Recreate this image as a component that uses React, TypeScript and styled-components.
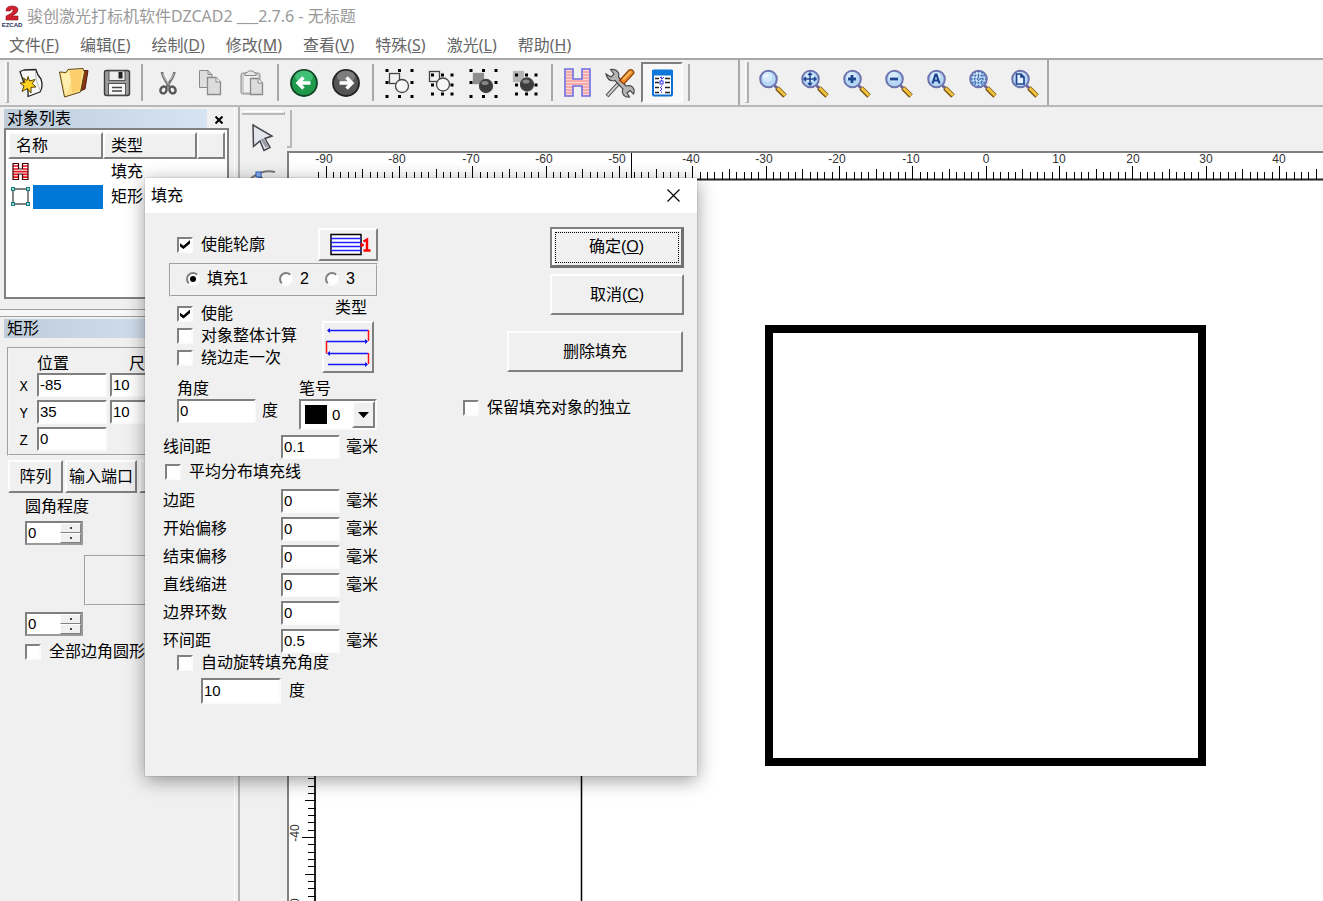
import React, { useEffect, useRef, useState } from "react";
import styled, { createGlobalStyle, css } from "styled-components";

const face = "#f0f0f0";
const shade = "#808080";
const uiFont = `"Liberation Sans", "Noto Sans CJK SC", sans-serif`;
const menuFont = `"Noto Sans", "Noto Sans CJK SC", sans-serif`;

const GlobalStyle = createGlobalStyle`
  *, *::before, *::after { box-sizing: border-box; }
  body { margin: 0; overflow: hidden; background: ${face}; }
  button, input, select { font: inherit; color: inherit; margin: 0; padding: 0; border-radius: 0; }
`;

const sunken = css`
  border: 2px solid;
  border-color: ${shade} #fbfbfb #fbfbfb ${shade};
`;

const raised = css`
  border: 2px solid;
  border-color: #fdfdfd ${shade} ${shade} #fdfdfd;
`;

const Window = styled.div`
  position: relative;
  display: flex;
  flex-direction: column;
  min-height: 100vh;
  background: ${face};
  color: #000;
  font: 16px/16px ${uiFont};
`;

/* ---------- title and menu ---------- */

const TitleBar = styled.header`
  display: flex;
  align-items: center;
  gap: 4px;
  height: 32px;
  padding-left: 1px;
  background: #fff;
  color: #999;
  font: 16px/20px ${menuFont};
`;

const TitleText = styled.h1`
  margin: 0;
  font: inherit;
  white-space: pre;
`;

const MenuBar = styled.nav`
  display: flex;
  gap: 21px;
  height: 26px;
  padding: 0 9px;
  background: #fff;
`;

const MenuItem = styled.button`
  border: 0;
  background: none;
  color: #666;
  font: 16px/24px ${menuFont};
`;

/* ---------- toolbar ---------- */

const ToolBar = styled.div`
  display: flex;
  align-items: stretch;
  height: 49px;
  border-top: 2px solid #a8a8a8;
  border-bottom: 2px solid #b8b8b8;
`;

const ToolGroup = styled.div<{ $room?: number; $lead?: number }>`
  display: flex;
  align-items: center;
  padding-left: ${(p) => p.$lead ?? 0}px;
  padding-right: ${(p) => p.$room ?? 5}px;
`;

const ToolButton = styled.button<{ $pressed?: boolean; $wide?: boolean }>`
  display: grid;
  place-items: center;
  width: ${(p) => (p.$wide ? 43 : 42)}px;
  height: 41px;
  border: 0;
  background: ${(p) => (p.$pressed ? "#f8f8f8" : "none")};
  ${(p) => p.$pressed && sunken}
`;

const Divider = styled.span<{ $full?: boolean }>`
  width: 2px;
  margin: ${(p) => (p.$full ? "0" : "4px 4px 4px 0")};
  background: #a8a8a8;
`;

const Grip = styled.span`
  width: 4px;
  margin: 2px 0 2px 5px;
  border-right: 2px solid #b0b0b0;
  border-left: 1px solid #fff;
  border-bottom: 1px solid #b0b0b0;
`;

/* ---------- main area ---------- */

const Main = styled.main`
  flex: 1;
  display: grid;
  grid-template-columns: 240px 47px minmax(0, 1fr);
`;

const Dock = styled.aside`
  display: flex;
  flex-direction: column;
  padding: 2px 7px 0 4px;
  border-right: 2px solid #b4b4b4;
  box-shadow: inset -3px 0 0 ${face}, inset -4px 0 0 #fff;
`;

const PanelTitle = styled.div`
  display: flex;
  justify-content: space-between;
  height: 19px;
`;

const PanelName = styled.h2`
  flex: 1;
  max-width: 203px;
  margin: 0;
  padding-left: 3px;
  background: linear-gradient(90deg, #bfcddb, #d7e4f2);
  font: 16px/19px ${uiFont};
`;

const PanelClose = styled.button`
  width: 24px;
  border: 0;
  background: none;
`;

const ListBox = styled.div`
  height: 171px;
  margin-right: 2px;
  border: 2px solid ${shade};
  background: #fff;
  padding: 2px;
`;

const ObjectTable = styled.table`
  width: 100%;
  table-layout: fixed;
  border-collapse: separate;
  border-spacing: 0;
`;

const HeadCell = styled.th<{ $width?: number }>`
  width: ${(p) => (p.$width ? `${p.$width}px` : "auto")};
  height: 27px;
  padding: 1px 0 0 6px;
  ${raised}
  background: ${face};
  font-weight: 400;
  text-align: left;
`;

const Cell = styled.td<{ $name?: boolean }>`
  height: 25px;
  padding: 0 0 0 ${(p) => (p.$name ? 3 : 8)}px;
`;

const NameSlot = styled.div<{ $selected?: boolean }>`
  display: flex;
  align-items: center;
  height: 24px;
  background: ${(p) => (p.$selected ? "linear-gradient(90deg, #fff 22px, #0078d7 22px)" : "none")};
`;

const Splitter = styled.div`
  height: 8px;
  margin: 10px -3px 2px -4px;
  border-top: 1px solid #a0a0a0;
  border-bottom: 1px solid #a0a0a0;
  background: #f6f6f6;
`;

const PropertyBox = styled.fieldset`
  display: grid;
  grid-template-columns: 25px 70px 70px;
  column-gap: 3px;
  grid-template-rows: 20px 27px 27px 27px;
  min-width: 0;
  height: 109px;
  margin: 9px 2px 0 3px;
  padding: 4px 0 0 0;
  border: 2px groove #f4f4f4;
`;

const ColumnTitle = styled.span<{ $centred?: boolean }>`
  padding-top: 3px;
  text-align: ${(p) => (p.$centred ? "center" : "left")};
`;

const AxisLabel = styled.label`
  padding: 6px 6px 0 0;
  font: 14px/16px "Liberation Mono", monospace;
  text-align: right;
`;

const TextBox = styled.input<{ $width?: number; $height?: number }>`
  width: ${(p) => p.$width ?? 59}px;
  height: ${(p) => p.$height ?? 24}px;
  padding: 0 1px 1px;
  ${sunken}
  background: #fff;
  font: 15px/18px ${uiFont};
`;

const ButtonRow = styled.div`
  display: flex;
  gap: 2px;
  margin: 4px 0 0 4px;
  overflow: hidden;
`;

const PushButton = styled.button<{ $width: number; $height: number; $default?: boolean }>`
  flex: none;
  display: grid;
  place-items: center;
  width: ${(p) => p.$width}px;
  height: ${(p) => p.$height}px;
  ${raised}
  background: ${face};
  white-space: nowrap;
  ${(p) =>
    p.$default &&
    css`
      border-width: 2px 3px 3px 2px;
      box-shadow: inset 1px 1px 0 1px #fff;
      border-color: #808080 #707070 #707070 #808080;
      outline: 1px dotted #000;
      outline-offset: -6px;
    `}
`;

const Caption = styled.span<{ $indent?: boolean }>`
  padding-left: ${(p) => (p.$indent ? 13 : 0)}px;
  white-space: nowrap;
`;

const CornerSection = styled.div`
  display: flex;
  flex-direction: column;
  align-items: flex-start;
  padding: 6px 0 0 21px;
`;

const SpinBox = styled.div`
  display: grid;
  grid-template-columns: 1fr 21px;
  grid-template-rows: 1fr 1fr;
  width: 58px;
  height: 24px;
  margin-top: 6px;
  ${sunken}
  border-right-color: #999;
  border-bottom-color: #999;
  background: #fff;
`;

const SpinValue = styled.input`
  grid-row: 1 / 3;
  width: 100%;
  min-width: 0;
  border: 0;
  background: none;
  padding-left: 1px;
  font: 15px/18px ${uiFont};
`;

const SpinButton = styled.button`
  display: grid;
  place-items: center;
  border: 1px solid;
  border-color: #fff ${shade} ${shade} #fff;
  background: ${face};

  &::before {
    content: "";
    width: 2px;
    height: 2px;
    background: #444;
  }
`;

const CornerPreview = styled.div`
  align-self: stretch;
  height: 51px;
  margin: 10px 24px 0 59px;
  border: 2px groove #f4f4f4;
`;

const RoundAll = styled.div`
  margin-top: 8px;
`;

const CheckLabel = styled.label`
  display: flex;
  align-items: center;
  gap: 8px;
  white-space: nowrap;
`;

const CheckBox = styled.input`
  appearance: none;
  flex: none;
  display: grid;
  place-items: center;
  width: 16px;
  height: 16px;
  ${sunken}
  background: #fff;

  &:checked::before {
    content: "";
    width: 10px;
    height: 9px;
    background: #000;
    clip-path: polygon(0 35%, 35% 65%, 100% 0, 100% 38%, 35% 100%, 0 72%);
  }
`;

const Radio = styled.input`
  appearance: none;
  flex: none;
  display: grid;
  place-items: center;
  width: 14px;
  height: 14px;
  ${sunken}
  border-radius: 50%;
  background: #fff;

  &:checked::before {
    content: "";
    width: 6px;
    height: 6px;
    border-radius: 50%;
    background: #000;
  }
`;

/* ---------- draw tools and canvas ---------- */

const Palette = styled.div`
  display: flex;
  flex-direction: column;
  align-items: flex-start;
  gap: 2px;
  padding-top: 4px;
`;

const PaletteGrip = styled.span`
  width: 43px;
  height: 4px;
  margin-left: 2px;
  border-top: 1px solid #fff;
  border-right: 1px solid #b0b0b0;
  border-bottom: 2px solid #b8b8b8;
`;

const PaletteButton = styled.button`
  display: grid;
  place-items: center;
  width: 44px;
  height: 42px;
  border: 0;
  background: none;
`;

const WorkArea = styled.section`
  display: flex;
  flex-direction: column;
  min-width: 0;
`;

const EmptyBar = styled.div`
  display: flex;
  height: 44px;
  padding: 3px 0;
`;

const EmptyGrip = styled.span`
  width: 5px;
  border-right: 2px solid #b8b8b8;
  border-bottom: 2px solid #b8b8b8;
`;

const View = styled.div`
  flex: 1;
  display: flex;
  border-top: 2px solid ${shade};
  border-left: 2px solid ${shade};
  background: #fff;
`;

const Drawing = styled.svg`
  flex: 1;
  display: block;
  min-width: 0;
  font: 12px "Liberation Sans", sans-serif;
`;

/* ---------- dialog ---------- */

const Dialog = styled.section`
  position: absolute;
  left: 145px;
  top: 178px;
  width: 552px;
  height: 598px;
  background: ${face};
  box-shadow: 0 4px 18px rgba(0, 0, 0, 0.4), 0 0 1px rgba(0, 0, 0, 0.4);
`;

const DialogTitle = styled.header`
  display: flex;
  align-items: center;
  justify-content: space-between;
  height: 35px;
  padding: 0 17px 0 6px;
  background: #fff;
`;

const DialogName = styled.h2`
  margin: 0;
  font: 16px/16px ${uiFont};
`;

const CloseButton = styled.button`
  display: grid;
  border: 0;
  background: none;
`;

const DialogBody = styled.form`
  display: flex;
  justify-content: space-between;
  padding: 14px 13px 0 18px;
`;

const FillForm = styled.div`
  width: 216px;
`;

const OutlineRow = styled.div`
  display: flex;
  justify-content: space-between;
  padding: 1px 1px 0 14px;
`;

const FillTabs = styled.fieldset`
  display: flex;
  align-items: center;
  height: 34px;
  min-width: 0;
  margin: 2px 1px 0 6px;
  padding: 0 0 2px 15px;
  border: 2px groove #f4f4f4;
`;

const TabChoice = styled.label<{ $width: number }>`
  display: flex;
  align-items: center;
  gap: 7px;
  width: ${(p) => p.$width}px;
`;

const EnableRow = styled.div`
  display: flex;
  justify-content: space-between;
  margin-top: 3px;
  padding: 0 5px 0 14px;
`;

const CheckStack = styled.div`
  display: grid;
  grid-auto-rows: 22px;
  padding-top: 3px;
`;

const TypeStack = styled.div`
  display: flex;
  flex-direction: column;
  gap: 5px;
`;

const AngleRow = styled.div`
  display: flex;
  justify-content: space-between;
  margin-top: 8px;
  padding: 0 2px 0 14px;
`;

const Stack = styled.div`
  display: flex;
  flex-direction: column;
  gap: 2px;
`;

const WithUnit = styled.div`
  display: flex;
  align-items: center;
  gap: 6px;
`;

const PenBox = styled.div`
  display: flex;
  align-items: center;
  width: 78px;
  height: 31px;
  padding-left: 4px;
  ${sunken}
  background: #fff;
`;

const PenColour = styled.span`
  flex: none;
  width: 22px;
  height: 19px;
  background: #000;
`;

const PenSelect = styled.select`
  appearance: none;
  flex: 1;
  min-width: 0;
  padding-left: 5px;
  border: 0;
  background: none;
  font: 15px/18px ${uiFont};
`;

const PenArrow = styled.span`
  display: grid;
  place-items: center;
  width: 23px;
  height: 27px;
  ${raised}
  background: ${face};
`;

const SizeRow = styled.div`
  display: grid;
  grid-template-columns: 118px 59px auto;
  align-items: center;
  height: 24px;
`;

const Unit = styled.span`
  padding-left: 6px;
`;

const SpacingBlock = styled.div`
  margin-top: 5px;
`;

const EvenRow = styled.div`
  margin-top: 5px;
  padding-left: 2px;
`;

const SizeList = styled.div`
  display: grid;
  gap: 4px;
  margin-top: 9px;
`;

const RotateBlock = styled.div`
  margin-top: 2px;
  padding-left: 14px;
`;

const RotateValue = styled.div`
  display: flex;
  align-items: center;
  gap: 8px;
  margin-top: 7px;
  padding-left: 24px;
`;

const Actions = styled.div`
  display: flex;
  flex-direction: column;
  align-items: flex-end;
  gap: 6px;
  width: 221px;
`;

const DeleteSlot = styled.div`
  margin-top: 10px;
  padding-right: 1px;
`;

const KeepSlot = styled.div`
  align-self: flex-start;
  margin-top: 22px;
`;

/* ---------- icons ---------- */

const Icon = ({ children }: { children: React.ReactNode }) => (
  <svg width="32" height="32" viewBox="0 0 32 32" aria-hidden="true">
    {children}
  </svg>
);

const Logo = () => (
  <svg width="22" height="24" viewBox="0 0 22 24" aria-hidden="true">
    <path d="M5 7 Q5 2 11 2 Q17 2 17 6 Q17 9 11 12 H17 V16 H5 V12 Q12 9 12 6.500 Q12 5 11 5 Q10 5 9.500 7 Z" fill="#d21f2b" stroke="#7d1420" strokeWidth=".6" />
    <text x="11" y="22.500" textAnchor="middle" fontSize="6" fontWeight="700" fontFamily="Liberation Sans" fill="#23305f">EZCAD</text>
  </svg>
);

const NewIcon = () => (
  <Icon>
    <path d="M5 4.500 L9 3 L21 2.500 Q22 8 26 12 Q28.500 20 25 25 L13 29.500 Q14 22 9 16 Z" fill="#f8f8f8" stroke="#222" strokeWidth="1.300" strokeLinejoin="round" />
    <path d="M20.500 3.500 Q20 12 25 23" fill="none" stroke="#bbb" />
    <path d="M13 9.500 L14.500 14 L20 12.500 L17.200 16.500 L21 20 L16 20.300 L16 26 L12.300 21.500 L7 24.500 L9 19 L5 16 L10 15.500 L8.500 11 L12 13.500 Z" fill="#ffd21f" stroke="#5a4200" strokeWidth="1" />
  </Icon>
);

const OpenIcon = () => (
  <Icon>
    <path d="M18 4 L30 3.500 L27 22 L22 24 Z" fill="#8a3416" stroke="#4e1c0a" />
    <path d="M1.500 5 L8 5.500 L10 2.500 L25 1.500 L26.500 5 L22.500 25 L6.500 30 Z" fill="#ffe08a" stroke="#5c4712" />
    <path d="M12 4 L24.500 3 L21.500 23.500 L14 26 Z" fill="#fdcf6c" />
    <path d="M3 6.500 L8 7 L11 4.500 L13 14 L8 28 Z" fill="#fff0b0" />
  </Icon>
);

const SaveIcon = () => (
  <Icon>
    <rect x="3.500" y="3.500" width="25" height="25" rx="2" fill="#9b9b9b" stroke="#3c3c3c" strokeWidth="1.400" />
    <rect x="8" y="4" width="16" height="9.500" fill="#eee" stroke="#555" />
    <rect x="17.500" y="5" width="4" height="6.500" fill="#222" />
    <rect x="7.500" y="16.500" width="17" height="11.500" fill="#f7f7f7" stroke="#555" />
    <path d="M11 20.500 H21 M11 24 H21" stroke="#444" strokeWidth="1.400" />
  </Icon>
);

const CutIcon = () => (
  <Icon>
    <path d="M10 5 Q10 9 17.500 20 M22.500 5 Q22 9 14.500 20" fill="none" stroke="#777" strokeWidth="2.600" />
    <path d="M10.500 7 L16.500 17 M22 7 L18 13" stroke="#ccc" strokeWidth="1" />
    <ellipse cx="11.500" cy="23" rx="3" ry="3.600" fill="none" stroke="#555" strokeWidth="2.400" transform="rotate(25 11.500 23)" />
    <ellipse cx="20.500" cy="23" rx="3" ry="3.600" fill="none" stroke="#555" strokeWidth="2.400" transform="rotate(-25 20.500 23)" />
  </Icon>
);

const CopyIcon = () => (
  <Icon>
    <path d="M5.500 3.500 H14 L18 7.500 V20.500 H5.500 Z" fill="#dedede" stroke="#8a8a8a" />
    <path d="M14 3.500 V7.500 H18" fill="none" stroke="#8a8a8a" />
    <path d="M13.500 10.500 H22 L26.500 15 V27.500 H13.500 Z" fill="#dcdcdc" stroke="#8a8a8a" strokeWidth="1.300" />
    <path d="M22 10.500 V15 H26.500" fill="#f5f5f5" stroke="#8a8a8a" />
  </Icon>
);

const PasteIcon = () => (
  <Icon>
    <rect x="5" y="6" width="19" height="21" rx="2" fill="#cfcfcf" stroke="#8f8f8f" />
    <path d="M9 8.500 V6 Q12 6 12.500 4 H17 Q17.500 6 20 6 V8.500 Z" fill="#e8e8e8" stroke="#8a8a8a" />
    <rect x="8" y="9" width="14" height="16" fill="#f1f1f1" />
    <path d="M14.500 11.500 H22 L26.500 16 V27.500 H14.500 Z" fill="#dcdcdc" stroke="#8a8a8a" strokeWidth="1.300" />
    <path d="M22 11.500 V16 H26.500" fill="#f5f5f5" stroke="#8a8a8a" />
  </Icon>
);

const ArrowIcon = ({ forward }: { forward?: boolean }) => (
  <Icon>
    <circle cx="16" cy="16" r="13" fill={forward ? "#555" : "#1f9a4b"} stroke={forward ? "#222" : "#134326"} strokeWidth="1.800" />
    <ellipse cx="16" cy="9.500" rx="9" ry="6" fill={forward ? "#8f8f8f" : "#4fd08a"} opacity=".7" />
    <path
      d="M22.500 16 H11 M15.500 10.500 L10 16 L15.500 21.500"
      fill="none"
      stroke="#fff"
      strokeWidth="3.400"
      transform={forward ? "rotate(180 16 16)" : undefined}
    />
  </Icon>
);

const Dots = ({ xs, ys }: { xs: number[]; ys: number[] }) => (
  <>
    {xs.flatMap((x, i) =>
      ys.map((y, j) => (i === 1 && j === 1 ? null : <rect key={`${i}${j}`} x={x - 1.5} y={y - 1.5} width="3" height="3" fill="#000" />)),
    )}
  </>
);

const CombineIcon = ({ filled, tight }: { filled?: boolean; tight?: boolean }) => {
  const squareFill = tight ? "#b5b5b5" : "#8d8d8d";
  return (
    <Icon>
      <rect x={tight ? 4.5 : 6.5} y={tight ? 4.5 : 6.5} width="10" height="10" fill={filled ? squareFill : "none"} stroke={filled ? squareFill : "#444"} strokeWidth="1.300" />
      <circle cx={tight ? 18 : 19} cy={tight ? 17.5 : 19} r="6.500" fill={filled ? "#3c3c3c" : "#f6f6f6"} stroke="#444" strokeWidth="1.300" />
      {filled && <ellipse cx={tight ? 17 : 18} cy={tight ? 14.5 : 16} rx="3.500" ry="2" fill="#999" opacity=".8" />}
      {tight ? <Dots xs={[7.5, 17.5, 27]} ys={[8, 18, 27]} /> : <Dots xs={[4, 16.5, 29]} ys={[3.5, 15.5, 29.5]} />}
    </Icon>
  );
};

const HatchIcon = () => (
  <Icon>
    <path d="M3 2 H11 V12 H20 V2 H28 V29 H20 V19 H11 V29 H3 Z" fill="#fcd6d6" />
    <path d="M4 5 H10 M21 5 H27 M4 8 H10 M21 8 H27 M4 11 H10 M21 11 H27 M4 14 H27 M4 17 H27 M4 20 H10 M21 20 H27 M4 23 H10 M21 23 H27 M4 26 H10 M21 26 H27" stroke="#f08080" strokeWidth="1.200" />
    <path d="M3 2 H11 V12 H20 V2 H28 V29 H20 V19 H11 V29 H3 Z" fill="none" stroke="#6c6ce0" strokeWidth="1.600" />
  </Icon>
);

const ToolsIcon = () => (
  <Icon>
    <path d="M3 29 L15 16" stroke="#444" strokeWidth="4" />
    <path d="M3.500 28.500 L15 16" stroke="#ccc" strokeWidth="2" />
    <path d="M2 7 L7 10 L10 7 L6.500 2.500 Q12 1.500 14.500 6 Q15 8 14.500 10 L22 19 Q28 17.500 30 22.500 Q30.500 25 29.500 27 L26 23.500 L23 26 L25.500 30 Q19.500 30.500 18.500 25.500 Q18 23.500 19 22 L11 13.500 Q4 15 2 7 Z" fill="#b5b5b5" stroke="#4a4a4a" strokeWidth="1.200" />
    <path d="M15.500 13.500 L25 3 Q29 1.500 30 6 L20 17 Z" fill="#f08a24" stroke="#8a430b" strokeWidth="1.200" />
    <path d="M19 12.500 L27 4.500" stroke="#ffc37a" strokeWidth="1.500" />
  </Icon>
);

const PropertiesIcon = () => (
  <Icon>
    <rect x="7" y="3.500" width="19" height="25" rx="1" fill="#fff" stroke="#0e6fd0" strokeWidth="2" />
    <rect x="6" y="3" width="21" height="5.500" fill="#0e78dc" />
    <path d="M9 11.500 H13 M9 15.500 H13 M9 20.500 H13 M9 25.500 H13 M19 11.500 H24 M19 15.500 H24 M19 20.500 H24 M19 25.500 H24" stroke="#222" strokeWidth="1.400" />
    <path d="M15.500 9.500 V27" stroke="#5b5bff" strokeDasharray="1.500 1.500" />
    <rect x="14" y="14" width="3" height="3" fill="#fff" stroke="#3030e0" />
    <path d="M14 10 L16 12 L18 10 M14 20 L16 22 L14 24" fill="none" stroke="#3030e0" />
  </Icon>
);

type LensKind = "plain" | "move" | "plus" | "minus" | "all" | "grid" | "page";

const lensMarks: Record<LensKind, React.ReactNode> = {
  plain: <path d="M6 11 Q8 7 12 7 Q11 10 6 11 Z" fill="#eef7ff" />,
  move: <path d="M5 12 H17 M11 6 V18 M7 10 L5 12 L7 14 M15 10 L17 12 L15 14 M9 8 L11 6 L13 8 M9 16 L11 18 L13 16" fill="none" stroke="#1f4590" strokeWidth="1.500" />,
  plus: <path d="M7 12 H15 M11 8 V16" stroke="#1f4590" strokeWidth="2.800" />,
  minus: <path d="M7 12 H15" stroke="#1f4590" strokeWidth="2.800" />,
  all: <path d="M7.500 16.500 L10.500 7.500 H11.500 L14.500 16.500 M8.500 13.500 H13.500" fill="none" stroke="#1f4590" strokeWidth="2.200" />,
  grid: <path d="M5 8.500 H18 M4 12 H19 M5 15.500 H18 M8 5 V19 M11.500 4 V20 M15 5 V19" stroke="#3a66ad" strokeWidth="1.400" strokeDasharray="1.600 1.200" />,
  page: <path d="M7.500 7 H12 L15 10 V17 H7.500 Z M12 7 V10 H15" fill="#e4f0fc" stroke="#1f4590" strokeWidth="1.700" />,
};

const LensIcon = ({ kind }: { kind: LensKind }) => (
  <Icon>
    <path d="M17.500 18.500 L21 22" stroke="#6a6798" strokeWidth="3" />
    <path d="M20 21 L28 29" stroke="#7a5514" strokeWidth="5" />
    <path d="M20.500 21 L28 28.500" stroke="#f3c23c" strokeWidth="2.800" />
    <circle cx="11.500" cy="12" r="8.300" fill="#b4d8f5" stroke="#6e74ad" strokeWidth="2" />
    <circle cx="10.500" cy="10" r="5" fill="#d4eafb" />
    {lensMarks[kind]}
  </Icon>
);

const HatchObjectIcon = () => (
  <svg width="19" height="19" viewBox="0 0 19 19" aria-hidden="true">
    <path d="M2 1.500 H7.500 V7 H11.500 V1.500 H17 V17.500 H11.500 V12 H7.500 V17.500 H2 Z" fill="#fff" />
    <path d="M2 4 H7 M12 4 H17 M2 7 H7 M12 7 H17 M2 9.700 H17 M2 12.400 H7 M12 12.400 H17 M2 15.200 H7 M12 15.200 H17" stroke="#e8101c" strokeWidth="1.700" />
    <path d="M2 1.500 H7.500 V7 H11.500 V1.500 H17 V17.500 H11.500 V12 H7.500 V17.500 H2 Z" fill="none" stroke="#400" strokeWidth="1.200" />
  </svg>
);

const RectObjectIcon = () => (
  <svg width="19" height="19" viewBox="0 0 19 19" aria-hidden="true">
    <path d="M2 2 H17 V17 H2 Z" fill="#fff" stroke="#555" strokeWidth="1.400" />
    {[2, 17].map((x) => [2, 17].map((y) => <rect key={`${x}${y}`} x={x - 1.5} y={y - 1.5} width="3" height="3" fill="#9adada" stroke="#187c7c" />))}
  </svg>
);

const PickIcon = () => (
  <svg width="24" height="30" viewBox="0 0 24 30" aria-hidden="true">
    <path d="M3 2 L22 13 L15 15.500 L20 24.500 L14 27.500 L10 18 L3.500 23.500 Z" fill="#e4e4ec" stroke="#44444c" strokeWidth="1.500" />
    <path d="M12 16 L17 24" stroke="#9a9aa6" strokeWidth="3" />
  </svg>
);

const NodeIcon = () => (
  <svg width="30" height="30" viewBox="0 0 30 30" aria-hidden="true">
    <path d="M2 13 Q14 2 28 5" fill="none" stroke="#777" strokeWidth="2" />
    <path d="M12 8 L24 20 L17 20 L12 25 Z" fill="#e4e4ec" stroke="#44444c" strokeWidth="1.500" />
    <rect x="9" y="5" width="5" height="5" fill="#8ab4f0" stroke="#2c5fc0" />
  </svg>
);

const OrderIcon = () => (
  <svg width="46" height="26" viewBox="0 0 46 26" aria-hidden="true">
    <path d="M6 2.500 H36 V22.500 H6 Z" fill="#fff" stroke="#000" strokeWidth="1.500" />
    <path d="M6 6.500 H36 M6 10.500 H36 M6 14.500 H36 M6 18.500 H36" stroke="#2222ff" strokeWidth="1.500" />
    <path d="M36 11 L39 13 L36 15 Z" fill="#f00" stroke="#f00" />
    <path d="M38.500 9.500 L42 7.500 V18.500 M38.500 18.500 H45.500" fill="none" stroke="#f00" strokeWidth="2.400" />
  </svg>
);

const PathIcon = () => (
  <svg width="48" height="48" viewBox="0 0 48 48" aria-hidden="true">
    <path d="M4 7.500 H44 M3 18.500 H43 M4 30.500 H44 M4 41.500 H43" stroke="#1414ff" strokeWidth="1.500" />
    <path d="M6 5 L3 7.500 L6 10 Z M6 28 L3 30.500 L6 33 Z M41 16 L44 18.500 L41 21 Z M41 39 L44 41.500 L41 44 Z" fill="#1414ff" />
    <path d="M44.500 7 V18 M2.500 18 V30.500 M44.500 30 V41" stroke="#ff1414" strokeWidth="1.500" />
  </svg>
);

/* ---------- drawing view ---------- */

const RULER = 27;
const UNIT = 22 / 3;
const ORIGIN_X = 697;
const ORIGIN_Y = 391;
const tickLength = (n: number) => (n % 10 === 0 ? 14 : n % 5 === 0 ? 11 : 8);
const range = (from: number, to: number) => Array.from({ length: Math.max(0, to - from + 1) }, (_, i) => from + i);

const DrawingView = () => {
  const ref = useRef<SVGSVGElement>(null);
  const [size, setSize] = useState({ width: 0, height: 0 });

  useEffect(() => {
    if (!ref.current) return;
    const observer = new ResizeObserver(([entry]) =>
      setSize({ width: entry.contentRect.width, height: entry.contentRect.height }),
    );
    observer.observe(ref.current);
    return () => observer.disconnect();
  }, []);

  const lastX = Math.floor((size.width - ORIGIN_X) / UNIT);
  const lastY = Math.floor((size.height - ORIGIN_Y) / UNIT);

  return (
    <Drawing ref={ref} role="img" aria-label="绘图区">
      <g stroke="#000">
        <path d={`M${RULER} ${RULER - 1}.5 H${size.width}`} strokeWidth="2" stroke="#222" />
        <path d={`M${RULER - 1} ${RULER} V${size.height}`} strokeWidth="2" stroke="#222" />
        {range(-91, lastX).map((n) => {
          const x = Math.round(ORIGIN_X + n * UNIT - 0.5) + 0.5;
          return <path key={n} d={`M${x} ${RULER} v${-tickLength(n)}`} />;
        })}
        {range(3, lastY).map((n) => {
          const y = Math.round(ORIGIN_Y + n * UNIT - 0.5) + 0.5;
          return <path key={n} d={`M${RULER} ${y} h${-tickLength(n)}`} />;
        })}
        <path d={`M342.5 0 V${RULER}`} />
        <path d={`M292.500 300 V${size.height}`} strokeWidth="1.500" />
      </g>
      <g fill="#333" textAnchor="middle">
        {range(-9, Math.floor(lastX / 10)).map((n) => (
          <text key={n} x={Math.round(ORIGIN_X + n * 10 * UNIT) - (n < 0 ? 2 : 0)} y="10">
            {n * 10}
          </text>
        ))}
        {range(1, Math.ceil(lastY / 10)).map((n) => (
          <text key={n} transform={`translate(10 ${Math.round(ORIGIN_Y + n * 10 * UNIT) - 4}) rotate(-90)`}>
            {n * -10}
          </text>
        ))}
      </g>
      <rect x="480" y="176" width="433" height="433" fill="none" stroke="#000" strokeWidth="8" />
    </Drawing>
  );
};

/* ---------- app ---------- */

const menus = [
  ["文件", "F"],
  ["编辑", "E"],
  ["绘制", "D"],
  ["修改", "M"],
  ["查看", "V"],
  ["特殊", "S"],
  ["激光", "L"],
  ["帮助", "H"],
];

const lenses: [LensKind, string][] = [
  ["plain", "缩放"],
  ["move", "平移"],
  ["plus", "放大"],
  ["minus", "缩小"],
  ["all", "全部"],
  ["grid", "选择"],
  ["page", "页面"],
];

const sizes = [
  ["margin", "边距", "0", "毫米"],
  ["start", "开始偏移", "0", "毫米"],
  ["end", "结束偏移", "0", "毫米"],
  ["indent", "直线缩进", "0", "毫米"],
  ["rings", "边界环数", "0", ""],
  ["ring-gap", "环间距", "0.5", "毫米"],
];

const SizeField = ({ id, label, value, unit }: { id: string; label: string; value: string; unit: string }) => (
  <SizeRow>
    <label htmlFor={id}>{label}</label>
    <TextBox id={id} defaultValue={value} />
    <Unit>{unit}</Unit>
  </SizeRow>
);

const Check = ({ label, checked }: { label: string; checked?: boolean }) => (
  <CheckLabel>
    <CheckBox type="checkbox" defaultChecked={checked} />
    {label}
  </CheckLabel>
);

const Spin = ({ label }: { label: string }) => (
  <SpinBox>
    <SpinValue aria-label={label} defaultValue="0" />
    <SpinButton type="button" aria-label="增加" />
    <SpinButton type="button" aria-label="减少" />
  </SpinBox>
);

const FillDialog = () => (
  <Dialog role="dialog" aria-labelledby="fill-title">
    <DialogTitle>
      <DialogName id="fill-title">填充</DialogName>
      <CloseButton aria-label="关闭">
        <svg width="13" height="13" viewBox="0 0 13 13" aria-hidden="true">
          <path d="M.5 .5 L12.500 12.500 M12.500 .5 L.5 12.500" stroke="#000" strokeWidth="1.200" />
        </svg>
      </CloseButton>
    </DialogTitle>
    <DialogBody onSubmit={(e) => e.preventDefault()}>
      <FillForm>
        <OutlineRow>
          <Check label="使能轮廓" checked />
          <PushButton type="button" $width={60} $height={33} aria-label="填充顺序">
            <OrderIcon />
          </PushButton>
        </OutlineRow>
        <FillTabs>
          <TabChoice $width={93}>
            <Radio type="radio" name="fill" defaultChecked />
            填充1
          </TabChoice>
          <TabChoice $width={46}>
            <Radio type="radio" name="fill" />2
          </TabChoice>
          <TabChoice $width={46}>
            <Radio type="radio" name="fill" />3
          </TabChoice>
        </FillTabs>
        <EnableRow>
          <CheckStack>
            <Check label="使能" checked />
            <Check label="对象整体计算" />
            <Check label="绕边走一次" />
          </CheckStack>
          <TypeStack>
            <Caption $indent>类型</Caption>
            <PushButton type="button" $width={52} $height={52} aria-label="填充类型">
              <PathIcon />
            </PushButton>
          </TypeStack>
        </EnableRow>
        <AngleRow>
          <Stack>
            <label htmlFor="angle">角度</label>
            <WithUnit>
              <TextBox id="angle" defaultValue="0" $width={79} />
              度
            </WithUnit>
          </Stack>
          <Stack>
            <label htmlFor="pen">笔号</label>
            <PenBox>
              <PenColour />
              <PenSelect id="pen" defaultValue="0">
                <option>0</option>
              </PenSelect>
              <PenArrow>
                <svg width="11" height="6" viewBox="0 0 11 6" aria-hidden="true">
                  <path d="M0 0 H11 L5.500 6 Z" />
                </svg>
              </PenArrow>
            </PenBox>
          </Stack>
        </AngleRow>
        <SpacingBlock>
          <SizeField id="spacing" label="线间距" value="0.1" unit="毫米" />
        </SpacingBlock>
        <EvenRow>
          <Check label="平均分布填充线" />
        </EvenRow>
        <SizeList>
          {sizes.map(([id, label, value, unit]) => (
            <SizeField key={id} id={id} label={label} value={value} unit={unit} />
          ))}
        </SizeList>
        <RotateBlock>
          <Check label="自动旋转填充角度" />
          <RotateValue>
            <TextBox aria-label="旋转角度" defaultValue="10" $width={80} $height={26} />
            度
          </RotateValue>
        </RotateBlock>
      </FillForm>
      <Actions>
        <PushButton type="submit" $width={134} $height={41} $default>
          <span>
            确定(<u>O</u>)
          </span>
        </PushButton>
        <PushButton type="button" $width={134} $height={41}>
          <span>
            取消(<u>C</u>)
          </span>
        </PushButton>
        <DeleteSlot>
          <PushButton type="button" $width={176} $height={41}>
            删除填充
          </PushButton>
        </DeleteSlot>
        <KeepSlot>
          <Check label="保留填充对象的独立" />
        </KeepSlot>
      </Actions>
    </DialogBody>
  </Dialog>
);

export default function App() {
  return (
    <Window>
      <GlobalStyle />
      <TitleBar>
        <Logo />
        <TitleText>骏创激光打标机软件DZCAD2 ___2.7.6 - 无标题</TitleText>
      </TitleBar>
      <MenuBar>
        {menus.map(([name, key]) => (
          <MenuItem key={key}>
            {name}(<u>{key}</u>)
          </MenuItem>
        ))}
      </MenuBar>
      <ToolBar>
        <Grip />
        <ToolGroup $room={3}>
          <ToolButton $wide aria-label="新建"><NewIcon /></ToolButton>
          <ToolButton $wide aria-label="打开"><OpenIcon /></ToolButton>
          <ToolButton $wide aria-label="保存"><SaveIcon /></ToolButton>
        </ToolGroup>
        <Divider />
        <ToolGroup $room={4}>
          <ToolButton aria-label="剪切"><CutIcon /></ToolButton>
          <ToolButton aria-label="复制"><CopyIcon /></ToolButton>
          <ToolButton aria-label="粘贴"><PasteIcon /></ToolButton>
        </ToolGroup>
        <Divider />
        <ToolGroup>
          <ToolButton aria-label="撤销"><ArrowIcon /></ToolButton>
          <ToolButton aria-label="重做"><ArrowIcon forward /></ToolButton>
        </ToolGroup>
        <Divider />
        <ToolGroup>
          <ToolButton aria-label="组合"><CombineIcon /></ToolButton>
          <ToolButton aria-label="分离组合"><CombineIcon tight /></ToolButton>
          <ToolButton aria-label="群组"><CombineIcon filled /></ToolButton>
          <ToolButton aria-label="分离群组"><CombineIcon filled tight /></ToolButton>
        </ToolGroup>
        <Divider />
        <ToolGroup>
          <ToolButton aria-label="填充"><HatchIcon /></ToolButton>
          <ToolButton aria-label="系统参数"><ToolsIcon /></ToolButton>
          <ToolButton aria-label="对象属性" $pressed><PropertiesIcon /></ToolButton>
        </ToolGroup>
        <Divider />
        <ToolGroup $room={44} />
        <Divider $full />
        <Grip />
        <ToolGroup $lead={3} $room={1}>
          {lenses.map(([kind, label]) => (
            <ToolButton key={kind} aria-label={label}>
              <LensIcon kind={kind} />
            </ToolButton>
          ))}
        </ToolGroup>
        <Divider $full />
      </ToolBar>
      <Main>
        <Dock>
          <PanelTitle>
            <PanelName>对象列表</PanelName>
            <PanelClose aria-label="关闭面板">
              <svg width="8" height="8" viewBox="0 0 8 8" aria-hidden="true">
                <path d="M.5 .5 L7.500 7.500 M7.500 .5 L.5 7.500" stroke="#000" strokeWidth="2" />
              </svg>
            </PanelClose>
          </PanelTitle>
          <ListBox>
            <ObjectTable>
              <thead>
                <tr>
                  <HeadCell $width={95}>名称</HeadCell>
                  <HeadCell $width={94}>类型</HeadCell>
                  <HeadCell />
                </tr>
              </thead>
              <tbody>
                <tr>
                  <Cell $name>
                    <NameSlot>
                      <HatchObjectIcon />
                    </NameSlot>
                  </Cell>
                  <Cell>填充</Cell>
                  <Cell />
                </tr>
                <tr>
                  <Cell $name>
                    <NameSlot $selected>
                      <RectObjectIcon />
                    </NameSlot>
                  </Cell>
                  <Cell>矩形</Cell>
                  <Cell />
                </tr>
              </tbody>
            </ObjectTable>
          </ListBox>
          <Splitter />
          <PanelTitle>
            <PanelName>矩形</PanelName>
          </PanelTitle>
          <PropertyBox>
            <span />
            <ColumnTitle>位置</ColumnTitle>
            <ColumnTitle $centred>尺寸</ColumnTitle>
            <AxisLabel htmlFor="pos-x">X</AxisLabel>
            <TextBox id="pos-x" defaultValue="-85" $width={70} />
            <TextBox aria-label="宽" defaultValue="10" $width={70} />
            <AxisLabel htmlFor="pos-y">Y</AxisLabel>
            <TextBox id="pos-y" defaultValue="35" $width={70} />
            <TextBox aria-label="高" defaultValue="10" $width={70} />
            <AxisLabel htmlFor="pos-z">Z</AxisLabel>
            <TextBox id="pos-z" defaultValue="0" $width={70} />
          </PropertyBox>
          <ButtonRow>
            <PushButton type="button" $width={55} $height={33}>阵列</PushButton>
            <PushButton type="button" $width={72} $height={33}>输入端口</PushButton>
            <PushButton type="button" $width={72} $height={33} aria-label="应用" />
          </ButtonRow>
          <CornerSection>
            <Caption>圆角程度</Caption>
            <Spin label="上圆角" />
            <CornerPreview />
            <Spin label="下圆角" />
            <RoundAll>
              <Check label="全部边角圆形" />
            </RoundAll>
          </CornerSection>
        </Dock>
        <Palette>
          <PaletteGrip />
          <PaletteButton aria-label="选择"><PickIcon /></PaletteButton>
          <PaletteButton aria-label="节点编辑"><NodeIcon /></PaletteButton>
        </Palette>
        <WorkArea>
          <EmptyBar>
            <EmptyGrip />
          </EmptyBar>
          <View>
            <DrawingView />
          </View>
        </WorkArea>
      </Main>
      <FillDialog />
    </Window>
  );
}
